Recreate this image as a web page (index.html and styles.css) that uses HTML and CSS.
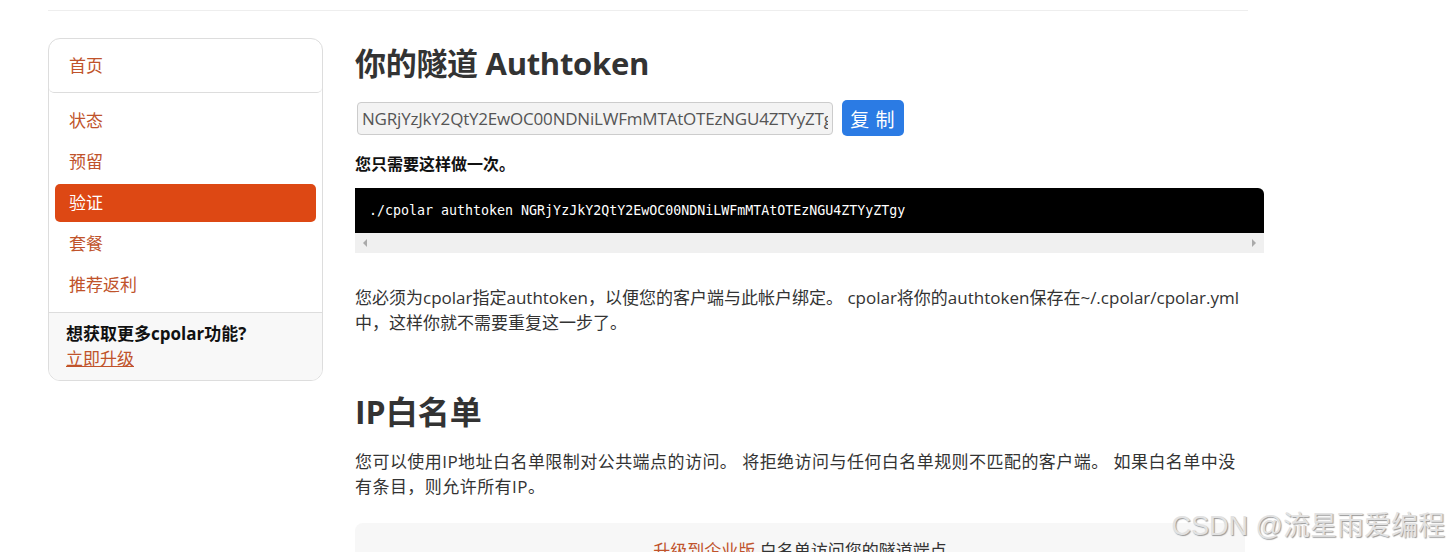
FILE: index.html
```html
<!DOCTYPE html>
<html lang="zh-CN">
<head>
  <meta charset="UTF-8">
  <meta name="viewport" content="width=device-width, initial-scale=1.0">
  <title>cpolar - 验证</title>
  <link rel="stylesheet" href="styles.css">
</head>
<body>
  <div class="pagina">
    <div class="linea-top"></div>

    <div class="contenido">
      <aside class="menu">
        <a class="menu-item inicio" href="#">首页</a>
        <nav class="menu-lista">
          <a class="menu-item" href="#">状态</a>
          <a class="menu-item" href="#">预留</a>
          <a class="menu-item activo" href="#">验证</a>
          <a class="menu-item" href="#">套餐</a>
          <a class="menu-item" href="#">推荐返利</a>
        </nav>
        <div class="menu-pie">
          <strong>想获取更多cpolar功能?</strong>
          <a href="#">立即升级</a>
        </div>
      </aside>

      <main class="principal">
        <h1>你的隧道 Authtoken</h1>
        <div class="token-fila">
          <input class="token" type="text" readonly value="NGRjYzJkY2QtY2EwOC00NDNiLWFmMTAtOTEzNGU4ZTYyZTgy">
          <button class="copiar">复 制</button>
        </div>
        <p class="nota">您只需要这样做一次。</p>

        <div class="codigo">
          <pre>./cpolar authtoken NGRjYzJkY2QtY2EwOC00NDNiLWFmMTAtOTEzNGU4ZTYyZTgy</pre>
          <div class="scroll">
            <span class="flecha izq"></span>
            <span class="flecha der"></span>
          </div>
        </div>

        <p class="texto">您必须为cpolar指定authtoken，以便您的客户端与此帐户绑定。 cpolar将你的authtoken保存在~/.cpolar/cpolar.yml中，这样你就不需要重复这一步了。</p>

        <h2>IP白名单</h2>
        <p class="texto ip">您可以使用IP地址白名单限制对公共端点的访问。 将拒绝访问与任何白名单规则不匹配的客户端。 如果白名单中没有条目，则允许所有IP。</p>

        <div class="aviso">
          <a href="#">升级到企业版</a> 白名单访问您的隧道端点
        </div>
      </main>
    </div>
  </div>

  <div class="marca">CSDN @流星雨爱编程</div>
</body>
</html>
```

FILE: styles.css
```css
body {
  margin: 0;
  font-family: "Open Sans", "Noto Sans CJK SC", sans-serif;
  color: #333;
  background: #fff;
  overflow: hidden;
}
a {
  color: #c0532b;
  text-decoration: none;
}
.pagina {
  width: 1200px;
  margin-left: 48px;
}
.linea-top {
  height: 10px;
  border-bottom: 1px solid #eee;
}
.contenido {
  display: flex;
  gap: 32px;
  padding-top: 27px;
}

/* menu lateral */
.menu {
  width: 273px;
  flex: none;
  border: 1px solid #ddd;
  border-radius: 12px;
  align-self: flex-start;
  overflow: hidden;
}
.menu-item {
  display: block;
  font-size: 17px;
  line-height: 38px;
  padding: 0 14px;
  margin: 3px 6px 0;
  border-radius: 5px;
}
.inicio {
  margin: 0;
  padding: 8px 20px 7px;
  border-bottom: 1px solid #ddd;
}
.menu-lista {
  padding: 6px 0 8px;
}
.menu-item.activo {
  background: #dd4814;
  color: #fff;
}
.menu-pie {
  background: #f8f8f8;
  border-top: 1px solid #ddd;
  padding: 8px 17px 9px;
  font-size: 17px;
  line-height: 25px;
}
.menu-pie strong {
  display: block;
  color: #111;
}
.menu-pie a {
  text-decoration: underline;
}

/* contenido principal */
.principal {
  width: 890px;
}
h1, h2 {
  font-size: 32px;
  font-weight: 700;
  margin: 0;
  color: #333;
}
h1 {
  font-size: 31px;
  line-height: 50px;
  letter-spacing: -0.3px;
}
.token-fila {
  display: flex;
  align-items: center;
  gap: 9px;
  margin-top: 12px;
}
.token {
  width: 476px;
  height: 33px;
  box-sizing: border-box;
  margin-left: 2px;
  padding: 0 4px;
  border: 1px solid #ccc;
  border-radius: 4px;
  background: #f3f3f3;
  color: #555;
  font-family: "Open Sans", sans-serif;
  font-size: 17px;
  letter-spacing: -0.2px;
}
.copiar {
  height: 36px;
  width: 62px;
  padding: 0;
  border: none;
  border-radius: 5px;
  background: #2b7be4;
  color: #fff;
  font-family: "Noto Sans CJK SC", sans-serif;
  font-size: 19px;
  letter-spacing: 1px;
}
.nota {
  margin: 15px 0 0;
  font-size: 16px;
  font-weight: 700;
  color: #111;
}
.codigo {
  margin-top: 13px;
  margin-right: -19px;
}
.codigo pre {
  margin: 0;
  background: #000;
  color: #fff;
  font-family: "DejaVu Sans Mono", monospace;
  font-size: 13.3px;
  line-height: 45px;
  padding: 0 14px;
  border-radius: 0 6px 0 0;
}
.scroll {
  height: 20px;
  background: #f0f0f0;
  display: flex;
  justify-content: space-between;
  align-items: center;
  padding: 0 8px;
}
.flecha {
  width: 0;
  height: 0;
  border-top: 4px solid transparent;
  border-bottom: 4px solid transparent;
}
.izq { border-right: 4px solid #aaa; }
.der { border-left: 4px solid #aaa; }
.texto {
  font-size: 17px;
  line-height: 25px;
  margin: 32px 0 0;
}
h2 {
  margin-top: 52px;
  line-height: 50px;
}
h2 + .texto {
  margin-top: 12px;
}
.ip {
  letter-spacing: 0.45px;
}
.aviso {
  margin-top: 24px;
  background: #f7f7f7;
  border-radius: 8px;
  text-align: center;
  padding: 14px 0 30px;
  font-size: 17px;
  color: #333;
}

.marca {
  position: absolute;
  right: 6px;
  top: 504px;
  font-family: "Liberation Sans", "Noto Sans CJK SC", sans-serif;
  font-size: 27px;
  color: #e2e2e2;
  text-shadow: 1px 1px 1px #999;
}
```
